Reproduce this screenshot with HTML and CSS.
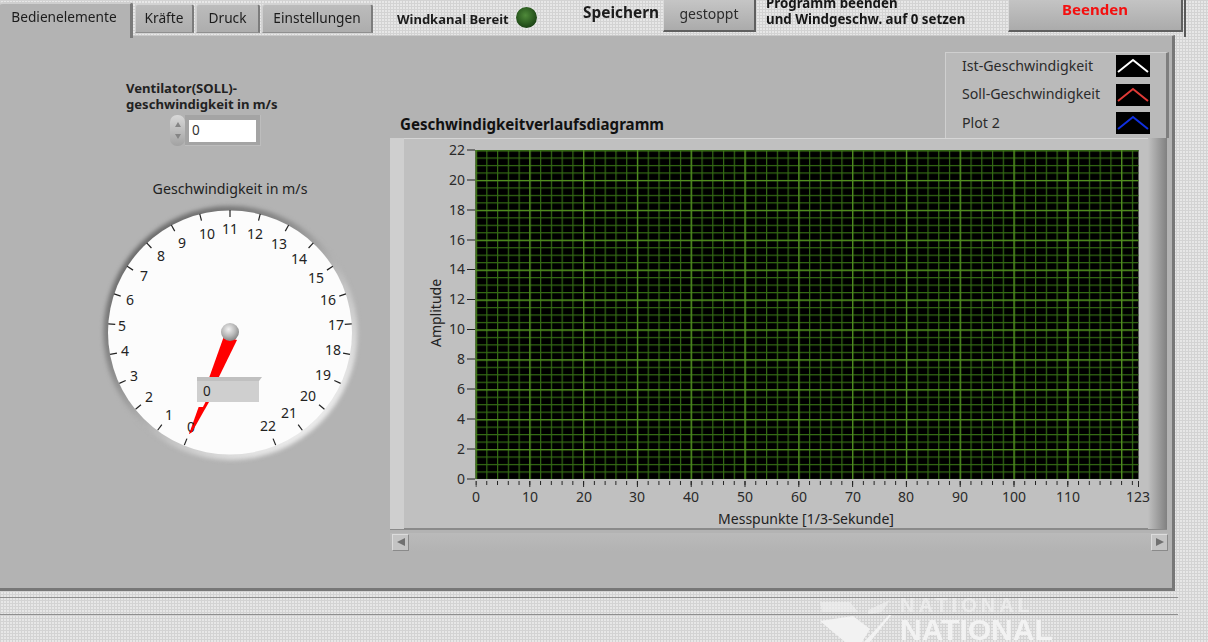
FILE: index.html
```html
<!DOCTYPE html>
<html lang="de">
<head>
<meta charset="utf-8">
<title>Windkanal</title>
<link rel="stylesheet" href="styles.css">
</head>
<body>
<div class="app">
  <header class="topbar">
    <nav class="tabs">
      <div class="tab active">Bedienelemente</div>
      <div class="tab t-kraefte">Kräfte</div>
      <div class="tab t-druck">Druck</div>
      <div class="tab t-einst">Einstellungen</div>
    </nav>
    <div class="status">Windkanal Bereit</div>
    <div class="led"></div>
    <div class="save">Speichern</div>
    <button class="btn btn-stop">gestoppt</button>
    <div class="note">Programm beenden<br>und Windgeschw. auf 0 setzen</div>
    <button class="btn btn-quit">Beenden</button>
    <div class="edge"></div>
  </header>

  <main class="panel">
    <section class="left">
      <div class="ctl-label">Ventilator(SOLL)-<br>geschwindigkeit in m/s</div>
      <div class="numeric">
        <div class="spin"><span class="up"></span><span class="down"></span></div>
        <div class="num-frame"><div class="num-field">0</div></div>
      </div>
      <div class="gauge-label">Geschwindigkeit in m/s</div>
      <svg class="gauge" width="270" height="272" viewBox="-135 -136 270 272">
        <defs>
          <linearGradient id="bezel" x1="0.15" y1="0.1" x2="0.85" y2="0.9">
            <stop offset="0" stop-color="#666666"/>
            <stop offset="0.35" stop-color="#8e8e8e"/>
            <stop offset="0.65" stop-color="#c4c4c4"/>
            <stop offset="1" stop-color="#f0f0f0"/>
          </linearGradient>
          <radialGradient id="hub" cx="0.42" cy="0.35" r="0.7">
            <stop offset="0" stop-color="#f2f2f2"/>
            <stop offset="0.55" stop-color="#b8b8b8"/>
            <stop offset="1" stop-color="#7c7c7c"/>
          </radialGradient>
        </defs>
        <circle class="bezel" cx="0.5" cy="1" r="127"/>
        <circle class="face" cx="0" cy="0.5" r="122"/>
        <g class="ticks">
          <line x1="0" y1="-122" x2="0" y2="-115" transform="rotate(-158)"/>
          <line x1="0" y1="-122" x2="0" y2="-115" transform="rotate(-143.64)"/>
          <line x1="0" y1="-122" x2="0" y2="-115" transform="rotate(-129.27)"/>
          <line x1="0" y1="-122" x2="0" y2="-115" transform="rotate(-114.91)"/>
          <line x1="0" y1="-122" x2="0" y2="-115" transform="rotate(-100.55)"/>
          <line x1="0" y1="-122" x2="0" y2="-115" transform="rotate(-86.18)"/>
          <line x1="0" y1="-122" x2="0" y2="-115" transform="rotate(-71.82)"/>
          <line x1="0" y1="-122" x2="0" y2="-115" transform="rotate(-57.45)"/>
          <line x1="0" y1="-122" x2="0" y2="-115" transform="rotate(-43.09)"/>
          <line x1="0" y1="-122" x2="0" y2="-115" transform="rotate(-28.73)"/>
          <line x1="0" y1="-122" x2="0" y2="-115" transform="rotate(-14.36)"/>
          <line x1="0" y1="-122" x2="0" y2="-115"/>
          <line x1="0" y1="-122" x2="0" y2="-115" transform="rotate(14.36)"/>
          <line x1="0" y1="-122" x2="0" y2="-115" transform="rotate(28.73)"/>
          <line x1="0" y1="-122" x2="0" y2="-115" transform="rotate(43.09)"/>
          <line x1="0" y1="-122" x2="0" y2="-115" transform="rotate(57.45)"/>
          <line x1="0" y1="-122" x2="0" y2="-115" transform="rotate(71.82)"/>
          <line x1="0" y1="-122" x2="0" y2="-115" transform="rotate(86.18)"/>
          <line x1="0" y1="-122" x2="0" y2="-115" transform="rotate(100.55)"/>
          <line x1="0" y1="-122" x2="0" y2="-115" transform="rotate(114.91)"/>
          <line x1="0" y1="-122" x2="0" y2="-115" transform="rotate(129.27)"/>
          <line x1="0" y1="-122" x2="0" y2="-115" transform="rotate(143.64)"/>
          <line x1="0" y1="-122" x2="0" y2="-115" transform="rotate(158)"/>
        </g>
        <polygon class="needle" points="-6,4 7,8 -38,100 -41,102"/>
        <g class="dial-nums">
          <text x="-39" y="100">0</text>
          <text x="-61" y="88">1</text>
          <text x="-81" y="70">2</text>
          <text x="-96" y="49">3</text>
          <text x="-105" y="24">4</text>
          <text x="-108" y="-1">5</text>
          <text x="-100" y="-27">6</text>
          <text x="-86" y="-51">7</text>
          <text x="-69" y="-71">8</text>
          <text x="-48" y="-84">9</text>
          <text x="-23" y="-93">10</text>
          <text x="0" y="-98">11</text>
          <text x="25" y="-93">12</text>
          <text x="49" y="-83">13</text>
          <text x="69" y="-68">14</text>
          <text x="86" y="-49">15</text>
          <text x="98" y="-27">16</text>
          <text x="106" y="-2">17</text>
          <text x="103" y="23">18</text>
          <text x="93" y="48">19</text>
          <text x="78" y="69">20</text>
          <text x="59" y="86">21</text>
          <text x="38" y="99">22</text>
        </g>
        <rect class="dig-white" x="-33" y="45" width="66" height="30"/>
        <polygon class="needle" points="-24.5,70 -21,70 -38,100 -41,102"/>
        <polygon class="dig-top" points="-33,45 32,45 29,49 -33,49"/>
        <rect class="dig-box" x="-33" y="49" width="62" height="21"/>
        <text class="dig-val" x="-27" y="64">0</text>
        <circle class="hub" cx="0" cy="0" r="9"/>
      </svg>
    </section>

    <section class="right">
      <div class="chart-head">
        <h2 class="chart-title">Geschwindigkeitverlaufsdiagramm</h2>
        <div class="legend">
          <div class="leg-row"><span>Ist-Geschwindigkeit</span>
            <svg class="swatch" width="34" height="22" viewBox="0 0 34 22"><polyline class="l-white" points="2,17 17,5 32,17"/></svg></div>
          <div class="leg-row"><span>Soll-Geschwindigkeit</span>
            <svg class="swatch" width="34" height="22" viewBox="0 0 34 22"><polyline class="l-red" points="2,17 17,5 32,17"/></svg></div>
          <div class="leg-row"><span>Plot 2</span>
            <svg class="swatch" width="34" height="22" viewBox="0 0 34 22"><polyline class="l-blue" points="2,17 17,5 32,17"/></svg></div>
        </div>
      </div>
      <div class="chart">
        <svg class="chart-svg" width="777" height="392" viewBox="0 0 777 392">
          <defs>
            <linearGradient id="shadeR" x1="0" x2="1" y1="0" y2="0">
              <stop offset="0" stop-color="#c0c0c0"/>
              <stop offset="1" stop-color="#808080"/>
            </linearGradient>
            <pattern id="minorV" patternUnits="userSpaceOnUse" x="85.5" y="0" width="10.76" height="8"><rect width="1.2" height="8" class="g-min"/></pattern>
            <pattern id="majorV" patternUnits="userSpaceOnUse" x="85.5" y="0" width="53.8" height="8"><rect width="1.2" height="8" class="g-maj"/></pattern>
            <pattern id="minorH" patternUnits="userSpaceOnUse" x="0" y="4.5" width="8" height="7.475"><rect width="8" height="1.2" class="g-min"/></pattern>
            <pattern id="majorH" patternUnits="userSpaceOnUse" x="0" y="12.1" width="8" height="29.9"><rect width="8" height="1.2" class="g-maj"/></pattern>
            <pattern id="tickMin" patternUnits="userSpaceOnUse" x="85.5" y="0" width="10.76" height="8"><rect width="1" height="8" class="t-fill"/></pattern>
            <pattern id="tickMaj" patternUnits="userSpaceOnUse" x="85.5" y="0" width="53.8" height="8"><rect width="1" height="8" class="t-fill"/></pattern>
          </defs>
          <rect class="band-l" x="0" y="0" width="14" height="391"/>
          <rect x="758" y="0" width="19" height="391" fill="url(#shadeR)"/>
          <rect class="plot" x="85.5" y="12" width="663" height="329"/>
          <rect x="85.5" y="12" width="663" height="329" fill="url(#minorV)"/>
          <rect x="85.5" y="12" width="663" height="329" fill="url(#minorH)"/>
          <rect x="85.5" y="12" width="663" height="329" fill="url(#majorV)"/>
          <rect x="85.5" y="13" width="663" height="328" fill="url(#majorH)"/>
          <rect x="85.5" y="343" width="663" height="4" fill="url(#tickMin)"/>
          <rect x="85.5" y="343" width="643" height="6" fill="url(#tickMaj)"/>
          <rect class="t-fill" x="748" y="343" width="1" height="6"/>
          <path class="y-ticks" d="M77 341H85M77 311H85M77 281H85M77 251H85M77 221H85M77 191.500H85M77 161.500H85M77 131.500H85M77 102H85M77 72H85M77 42H85M77 12H85"/>
          <g class="y-nums">
            <text x="75" y="346">0</text>
            <text x="75" y="316">2</text>
            <text x="75" y="286">4</text>
            <text x="75" y="256">6</text>
            <text x="75" y="226">8</text>
            <text x="75" y="196">10</text>
            <text x="75" y="166">12</text>
            <text x="75" y="136">14</text>
            <text x="75" y="107">16</text>
            <text x="75" y="77">18</text>
            <text x="75" y="47">20</text>
            <text x="75" y="17">22</text>
          </g>
          <g class="x-nums">
            <text x="86" y="364">0</text>
            <text x="140" y="364">10</text>
            <text x="194" y="364">20</text>
            <text x="247" y="364">30</text>
            <text x="301" y="364">40</text>
            <text x="355" y="364">50</text>
            <text x="409" y="364">60</text>
            <text x="463" y="364">70</text>
            <text x="516" y="364">80</text>
            <text x="570" y="364">90</text>
            <text x="624" y="364">100</text>
            <text x="678" y="364">110</text>
            <text x="748" y="364">123</text>
          </g>
          <text class="axis-title" x="416" y="386">Messpunkte [1/3-Sekunde]</text>
          <text class="axis-title" transform="translate(51 175) rotate(-90)">Amplitude</text>
        </svg>
      </div>
      <div class="scroll">
        <div class="sbtn"><span class="arr-l"></span></div>
        <div class="sbtn"><span class="arr-r"></span></div>
      </div>
    </section>
  </main>

  <footer class="foot">
    <div class="rule r1"></div>
    <div class="rule r2"></div>
    <div class="logo">
      <svg class="eagle" width="80" height="45" viewBox="0 0 80 45">
        <polygon class="e-faint" points="0,5 30,5 38,15 2,15"/>
        <polygon points="0,24 33,19 50,32 42,45 25,45"/>
        <polygon class="e-faint" points="48,13 70,3 62,15 48,17"/>
        <polygon points="44,45 70,17 72,17 50,45"/>
      </svg>
      <div class="logo-text">
        <div class="lt-a">NATIONAL</div>
        <div class="lt-b">NATIONAL</div>
      </div>
    </div>
  </footer>
</div>
</body>
</html>
```
FILE: styles.css
```css
* { box-sizing: border-box; }
html, body { margin: 0; height: 100%; overflow: hidden; }
body {
  font-family: "Noto Sans", "Open Sans", sans-serif;
  color: #1c1c1c;
  background-color: #e7e7e7;
  background-image:
    repeating-linear-gradient(to right, #d3d3d3 0 1px, transparent 1px 3px),
    repeating-linear-gradient(to bottom, #d3d3d3 0 1px, transparent 1px 3px);
}
.app { width: 1208px; height: 642px; display: flex; flex-direction: column; filter: blur(0.45px); }

/* top bar */
.topbar { height: 35px; display: flex; align-items: flex-start; position: relative; z-index: 2; }
.tabs { display: flex; width: 397px; gap: 2px; align-items: flex-start; flex: none; }
.tab {
  height: 29px; margin-top: 4px; font-size: 13.7px; line-height: 26px; text-align: center;
  background: linear-gradient(#bcbcbc, #adadad);
  border-top: 1px solid #d2d2d2; border-left: 1px solid #cfcfcf;
  border-right: 2px solid #7c7c7c; border-bottom: 1px solid #8f8f8f;
  border-radius: 3px 3px 0 0;
  white-space: nowrap;
}
.tab.active {
  width: 133px; height: 36px; margin-top: 2px; margin-bottom: -3px; line-height: 25px;
  background: #b3b3b3; border-bottom: 0; border-left: 0; padding-right: 2px;
  border-right: 3px solid #7a7a7a; border-top: 2px solid #cfcfcf;
}
.t-kraefte { width: 59px; }
.t-druck { width: 64px; }
.t-einst { width: 111px; }
.status { width: 119px; font-size: 13px; font-weight: 700; line-height: 16px; margin-top: 11px; white-space: nowrap; flex: none; }
.led {
  width: 21px; height: 21px; margin: 7px 0 0 0; border-radius: 50%; flex: none;
  background: radial-gradient(circle at 45% 40%, #4f8a3a 0, #2f6023 45%, #173c12 80%);
  box-shadow: 0 0 2px #f4f4f4;
}
.save { width: 80px; margin: 3px 0 0 46px; font-size: 15.4px; font-weight: 700; line-height: 19px; white-space: nowrap; flex: none; }
.btn {
  display: block; padding: 0; font-family: inherit; flex: none;
  background: linear-gradient(#c6c6c6, #ababab);
  border-top: 1px solid #d8d8d8; border-left: 1px solid #d8d8d8;
  border-right: 2px solid #5f5f5f; border-bottom: 2px solid #5f5f5f;
}
.btn-stop { width: 93px; height: 34px; margin-top: -2px; padding-bottom: 2px; font-size: 14px; color: #2b2b2b; }
.note { width: 242px; margin: -5px 0 0 10px; font-size: 13.3px; font-weight: 700; line-height: 16px; white-space: nowrap; flex: none; color: #161616; }
.btn-quit { width: 175px; height: 36px; margin-top: -4px; padding-bottom: 9px; font-size: 15px; font-weight: 700; color: #f40f0f; }
.edge { width: 2px; height: 37px; margin-left: 1px; background: #5a5a5a; flex: none; }

/* main panel */
.panel {
  width: 1175px; height: 556px; flex: none; display: flex;
  background: #b3b3b3;
  border-top: 1px solid #c9c9c9; border-right: 3px solid #777; border-bottom: 3px solid #777;
}
.left { width: 390px; flex: none; position: relative; }
.ctl-label { margin: 44px 0 0 126px; font-size: 13.1px; font-weight: 700; line-height: 16px; color: #222; white-space: nowrap; }
.numeric { display: flex; margin: 3px 0 0 170px; height: 31px; }
.spin {
  width: 15px; height: 31px; border-radius: 7px; display: flex; flex-direction: column; align-items: center; justify-content: space-around; padding: 4px 0;
  background: linear-gradient(#d8d8d8, #a2a2a2);
}
.up, .down { width: 0; height: 0; border-left: 3px solid transparent; border-right: 3px solid transparent; }
.up { border-bottom: 5px solid #858585; }
.down { border-top: 5px solid #858585; }
.num-frame { width: 76px; height: 31px; padding: 5px 4px 4px 4px; background: #a4a4a4; border-right: 1px solid #bdbdbd; border-bottom: 1px solid #bdbdbd; }
.num-field { height: 22px; background: #fff; font-size: 13.5px; line-height: 21px; padding-left: 3px; color: #333; }
.gauge-label { width: 260px; margin: 34px 0 0 100px; text-align: center; font-size: 14.2px; line-height: 18px; color: #222; white-space: nowrap; }
.gauge { display: block; margin: -2px 0 0 95px; }
.bezel { fill: url(#bezel); filter: blur(2px); }
.face { fill: #fcfcfc; }
.ticks line { stroke: #222; stroke-width: 1.2; }
.needle { fill: #ff0000; }
.dial-nums text { font-size: 14px; fill: #232323; text-anchor: middle; }
.dig-white { fill: #fcfcfc; }
.dig-top { fill: #c0c0c0; }
.dig-box { fill: #cfcfcf; }
.dig-val { font-size: 13.5px; fill: #222; }
.hub { fill: url(#hub); }

/* chart */
.right { width: 782px; flex: none; display: flex; flex-direction: column; }
.chart-head { height: 102px; display: flex; justify-content: space-between; align-items: flex-end; }
.chart-title { margin: 0 0 4px 10px; font-size: 15.1px; line-height: 20px; font-weight: 700; color: #111; white-space: nowrap; }
.legend {
  width: 224px; height: 86px; margin-right: 3px; padding: 2px 16px 0 16px;
  background: #bababa; border-top: 1px solid #cfcfcf; border-left: 1px solid #cfcfcf; border-right: 3px solid #7e7e7e;
}
.leg-row { display: flex; justify-content: space-between; align-items: center; height: 22px; margin-bottom: 6.500px; font-size: 14.2px; color: #2b2b2b; }
.leg-row span { position: relative; top: -1px; white-space: nowrap; }
.swatch { background: #000; display: block; }
.l-white, .l-red, .l-blue { fill: none; stroke-width: 2; }
.l-white { stroke: #fff; }
.l-red { stroke: #e03a36; }
.l-blue { stroke: #1030e0; }
.chart { width: 777px; height: 392px; background: #c0c0c0; flex: none; box-shadow: inset 0 1px 0 #d6d6d6, inset 0 -2px 0 #8a8a8a; }
.chart-svg { display: block; }
.band-l { fill: #cfcfcf; }
.plot { fill: #000; }
.g-min { fill: #346b14; }
.g-maj { fill: #528f20; }
.t-fill { fill: #222; }
.y-ticks { stroke: #222; stroke-width: 1; fill: none; }
.y-nums text { font-size: 14px; fill: #2a2a2a; text-anchor: end; }
.x-nums text { font-size: 14px; fill: #2a2a2a; text-anchor: middle; }
.axis-title { font-size: 14px; fill: #222; text-anchor: middle; }
.scroll { width: 778px; height: 18px; margin-top: 3px; padding: 0 0 0 2px; display: flex; justify-content: space-between; align-items: center; background: linear-gradient(#bababa, #b3b3b3); }
.sbtn { width: 17px; height: 17px; display: flex; align-items: center; justify-content: center; background: #c4c4c4; border-top: 1px solid #dcdcdc; border-left: 1px solid #dcdcdc; border-right: 1px solid #8a8a8a; border-bottom: 1px solid #8a8a8a; }
.arr-l, .arr-r { width: 0; height: 0; border-top: 4px solid transparent; border-bottom: 4px solid transparent; }
.arr-l { border-right: 8px solid #707070; }
.arr-r { border-left: 8px solid #707070; }

/* footer */
.foot { flex: 1; min-height: 0; position: relative; overflow: hidden; }
.rule { position: absolute; left: 0; width: 1178px; height: 1px; background: #8e8e8e; z-index: 1; }
.r1 { top: 6px; }
.r2 { top: 23px; }
.logo { display: flex; margin: 6px 0 0 820px; }
.eagle { display: block; flex: none; }
.eagle polygon { fill: #f2f2f2; }
.eagle .e-faint { opacity: .6; }
.logo-text { font-family: "Liberation Sans", sans-serif; font-weight: 700; color: #f2f2f2; }
.lt-a { font-size: 20px; line-height: 17px; letter-spacing: 4px; opacity: .65; }
.lt-b { font-size: 30px; line-height: 27px; margin-top: 2px; }
```
